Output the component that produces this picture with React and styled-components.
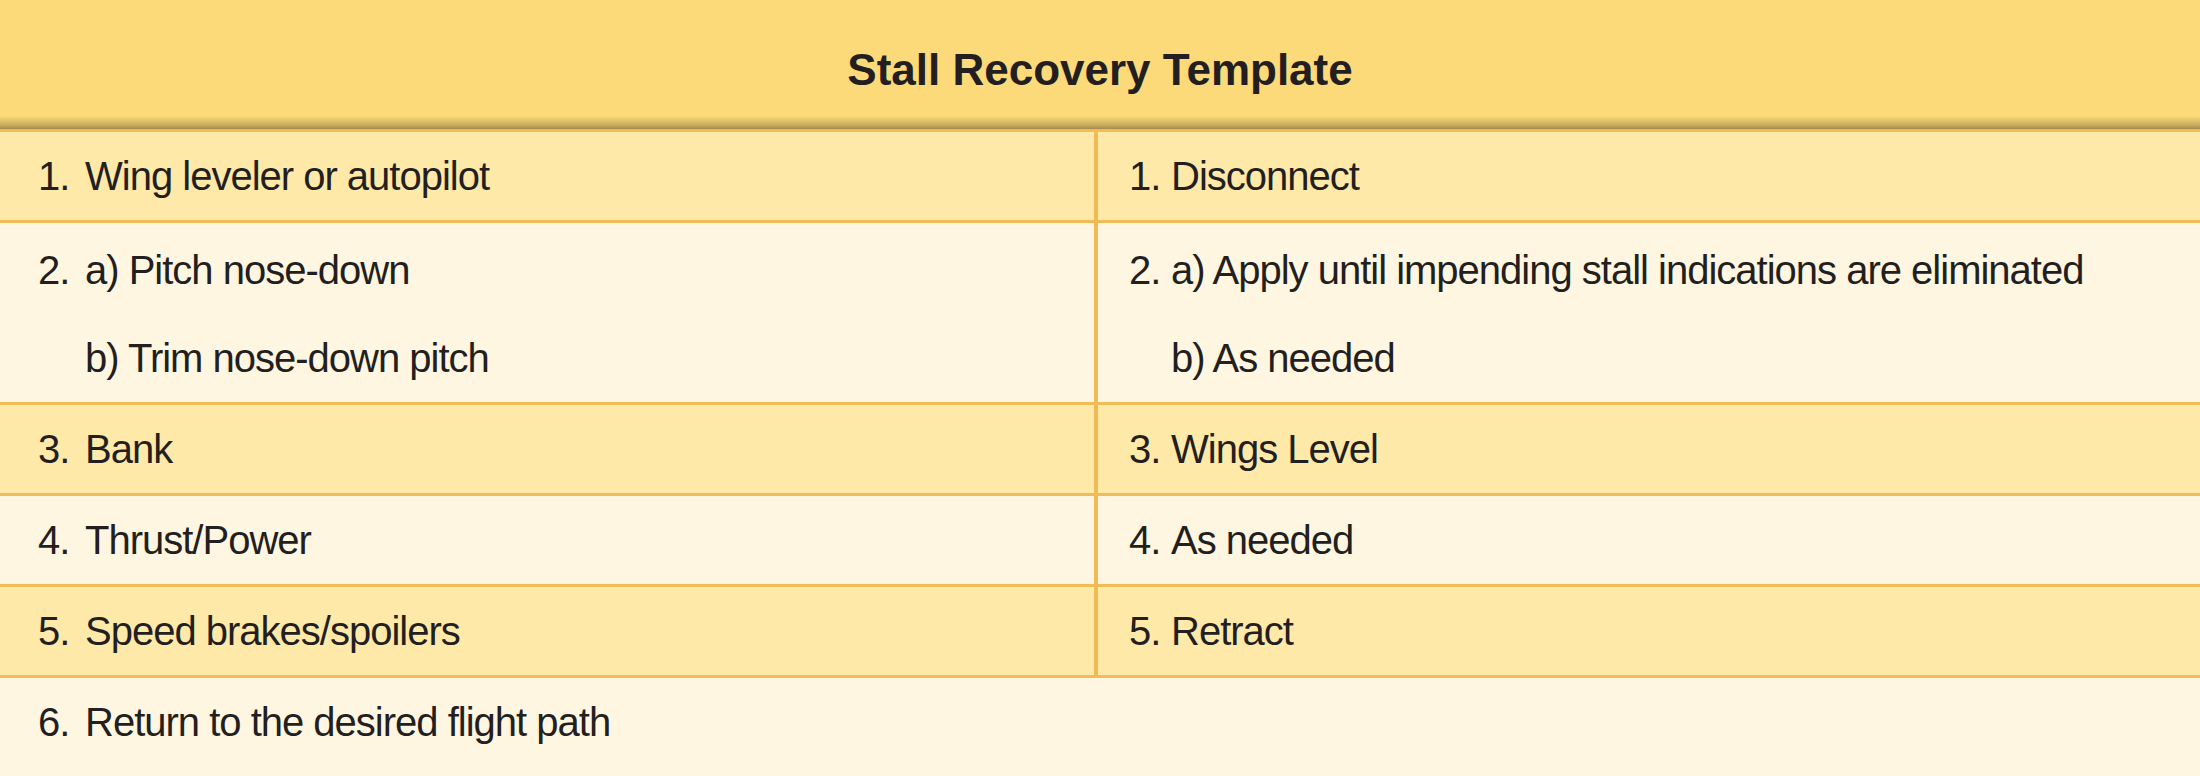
import React from 'react'
import styled, { createGlobalStyle } from 'styled-components'

const rows = [
    { tone: 'dark', left: [['1.', 'Wing leveler or autopilot']], right: [['1.', 'Disconnect']] },
    {
        tone: 'light',
        left: [['2.', 'a) Pitch nose-down'], ['', 'b) Trim nose-down pitch']],
        right: [['2.', 'a) Apply until impending stall indications are eliminated'], ['', 'b) As needed']],
    },
    { tone: 'dark', left: [['3.', 'Bank']], right: [['3.', 'Wings Level']] },
    { tone: 'light', left: [['4.', 'Thrust/Power']], right: [['4.', 'As needed']] },
    { tone: 'dark', left: [['5.', 'Speed brakes/spoilers']], right: [['5.', 'Retract']] },
]

const App = () => {
    return (
        <>
            <Global />
            <Page>
                <Header>
                    <Title>Stall Recovery Template</Title>
                </Header>
                {rows.map((row, i) => {
                    const tall = row.left.length > 1
                    return (
                        <Row key={i} $tone={row.tone}>
                            <LeftCell $tall={tall}>
                                {row.left.map(([num, text], j) => (
                                    <Line key={j}>
                                        <Num $w={47}>{num}</Num>
                                        <span>{text}</span>
                                    </Line>
                                ))}
                            </LeftCell>
                            <RightCell $tall={tall}>
                                {row.right.map(([num, text], j) => (
                                    <Line key={j}>
                                        <Num $w={42}>{num}</Num>
                                        <span>{text}</span>
                                    </Line>
                                ))}
                            </RightCell>
                        </Row>
                    )
                })}
                <LastRow>
                    <Line>
                        <Num $w={47}>6.</Num>
                        <span>Return to the desired flight path</span>
                    </Line>
                </LastRow>
            </Page>
        </>
    )
}

export default App

const Global = createGlobalStyle`
body{
    margin:0;
    background:#FFF6E1;
}
`
const Page = styled.div`
width:2200px;
height:776px;
display:flex;
flex-direction:column;
background:#FFF6E1;
font-family:"Liberation Sans", Arial, sans-serif;
color:#231F20;
overflow:hidden;
`
const Header = styled.div`
height:132px;
flex-shrink:0;
display:flex;
align-items:center;
justify-content:center;
padding-top:10px;
box-sizing:border-box;
background:linear-gradient(to bottom, #FDDA79 0px, #FDDA79 116px, #C9AC5E 125px, #85703F 132px);
border-bottom:3px solid #F3BB55;
`
const Title = styled.div`
font-size:44px;
font-weight:700;
`
const Row = styled.div`
display:flex;
flex-shrink:0;
background:${p => p.$tone === 'dark' ? '#FFE9A9' : '#FFF6E1'};
border-bottom:3px solid #F1BC55;
`
const LeftCell = styled.div`
width:1098px;
box-sizing:border-box;
padding-left:38px;
padding-top:${p => p.$tall ? '3px' : '0'};
border-right:4px solid #F1BC55;
`
const RightCell = styled.div`
flex:1;
padding-left:31px;
padding-top:${p => p.$tall ? '3px' : '0'};
`
const Line = styled.div`
height:88px;
display:flex;
align-items:center;
font-size:40px;
letter-spacing:-1px;
white-space:nowrap;
`
const Num = styled.span`
width:${p => p.$w}px;
flex-shrink:0;
`
const LastRow = styled.div`
flex:1;
padding-left:38px;
`
